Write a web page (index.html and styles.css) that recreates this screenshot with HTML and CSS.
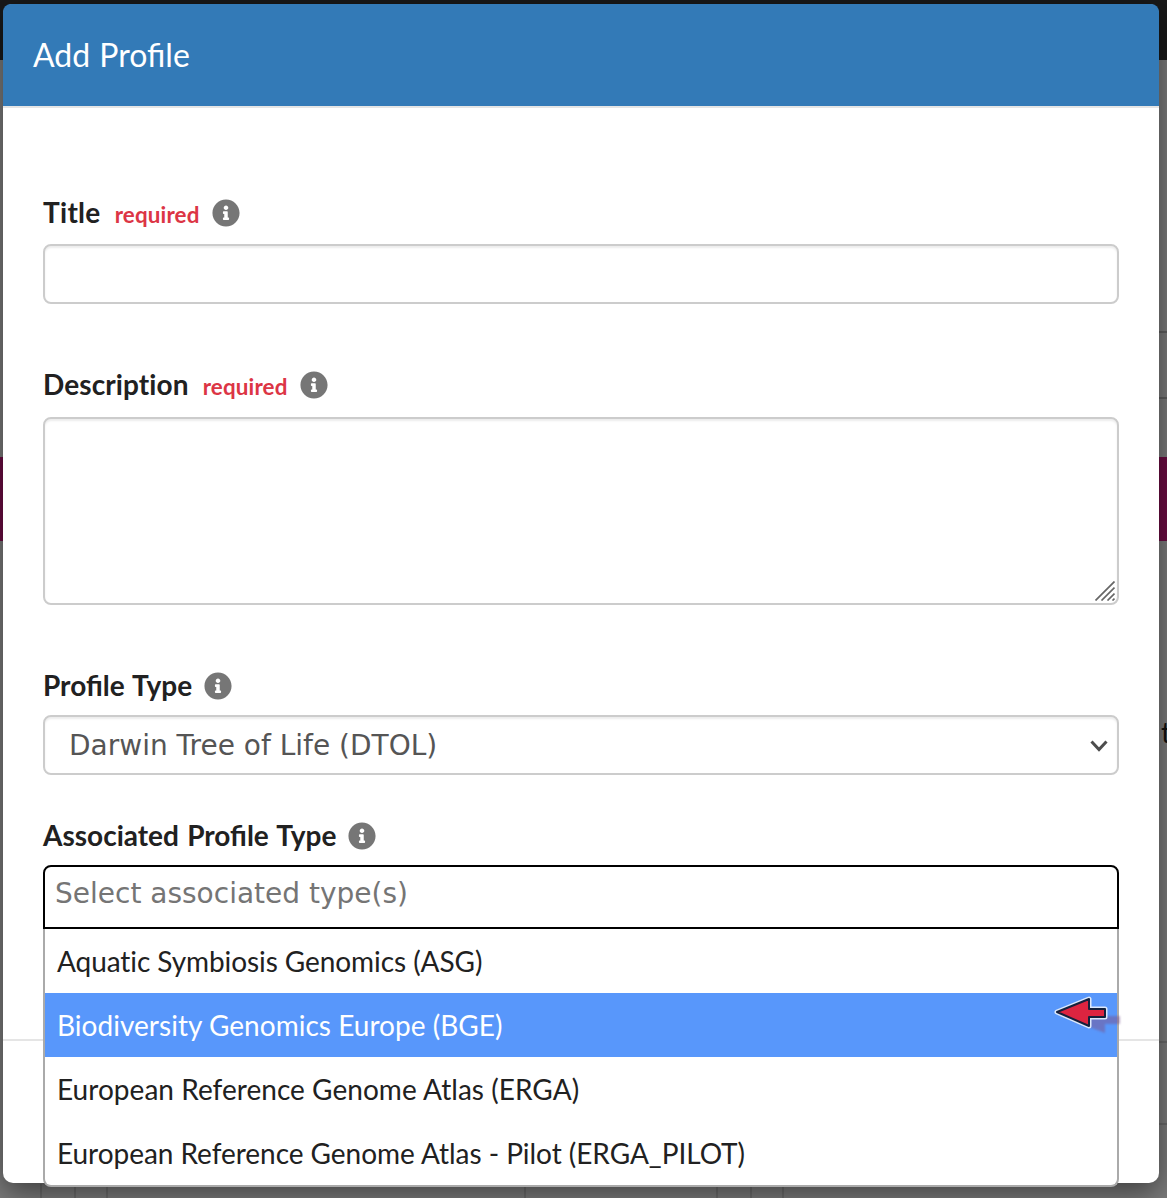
FILE: index.html
```
<!DOCTYPE html>
<html lang="en">
<head>
<meta charset="utf-8">
<title>Add Profile</title>
<link rel="stylesheet" href="styles.css">
</head>
<body>
<svg class="defs" width="0" height="0" aria-hidden="true">
  <symbol id="info" viewBox="0 0 512 512">
    <path fill="currentColor" d="M256 8C119 8 8 119 8 256s111 248 248 248 248-111 248-248S393 8 256 8zm0 110c23.200 0 42 18.800 42 42s-18.800 42-42 42-42-18.800-42-42 18.800-42 42-42zm56 254c0 6.600-5.400 12-12 12h-88c-6.600 0-12-5.400-12-12v-24c0-6.600 5.400-12 12-12h12v-64h-12c-6.600 0-12-5.400-12-12v-24c0-6.600 5.400-12 12-12h64c6.600 0 12 5.400 12 12v100h12c6.600 0 12 5.400 12 12v24z"/>
  </symbol>
</svg>
<div class="page">
  <div class="navbar"></div>
  <div class="intro"></div>
  <div class="banner"></div>
  <div class="content"><span class="page-text">t</span></div>
</div>
<div class="modal" role="dialog">
  <header class="modal-header"><h1>Add Profile</h1></header>
  <main class="modal-body">
    <div class="field title-field">
      <div class="label-row"><label>Title</label><span class="required">required</span><svg class="info"><use href="#info"/></svg></div>
      <div class="control"></div>
    </div>
    <div class="field description-field">
      <div class="label-row"><label>Description</label><span class="required">required</span><svg class="info"><use href="#info"/></svg></div>
      <div class="control textarea">
        <svg class="grip" width="20" height="20" viewBox="0 0 20 20"><path d="M.5 19.500L19.500.5M6.500 19.500l13-13M12.500 19.500l7-7M17.500 19.500l2-2"/></svg>
      </div>
    </div>
    <div class="field type-field">
      <div class="label-row"><label>Profile Type</label><svg class="info"><use href="#info"/></svg></div>
      <div class="control select"><span>Darwin Tree of Life (DTOL)</span>
        <svg class="chevron" width="18" height="12" viewBox="0 0 18 12"><path d="M1.500 1.500L9 9.500l7.500-8"/></svg>
      </div>
    </div>
    <div class="field associated-field">
      <div class="label-row"><label>Associated Profile Type</label><svg class="info"><use href="#info"/></svg></div>
      <div class="control search">Select associated type(s)
        <ul class="options">
          <li class="asg">Aquatic Symbiosis Genomics (ASG)</li>
          <li class="active">Biodiversity Genomics Europe (BGE)</li>
          <li class="erga">European Reference Genome Atlas (ERGA)</li>
          <li class="pilot">European Reference Genome Atlas - Pilot (ERGA_PILOT)</li>
        </ul>
        <svg class="pointer" width="70" height="44" viewBox="0 0 70 44">
          <defs><filter id="soft"><feGaussianBlur stdDeviation="1"/></filter></defs>
          <path class="pointer-shadow" filter="url(#soft)" d="M19 26l31-13v9h18v8H53v9z"/>
          <path class="pointer-halo" d="M5 18l32-13v10h16v8H37v9z"/>
          <path class="pointer-shape" d="M5 18l32-13v10h16v8H37v9z"/>
        </svg>
      </div>
    </div>
  </main>
  <footer class="modal-footer"></footer>
</div>
</body>
</html>
```
FILE: styles.css
```
* { box-sizing: border-box; }
body {
  margin: 0;
  height: 1198px;
  overflow: hidden;
  position: relative;
  font-family: Lato, sans-serif;
  font-size: 28px;
  color: #212121;
}
.defs { position: absolute; }
.page {
  height: 1198px;
  display: grid;
  grid-template-rows: 60px 397px 84px 1fr;
  background: #7c7c7c;
}
.navbar { background: #191919; }
.intro {
  background:
    linear-gradient(#5f5f5f, #5f5f5f) right 271px / 9px 2px no-repeat,
    linear-gradient(#5f5f5f, #5f5f5f) right 337px / 9px 2px no-repeat;
}
.banner { background: #6c0c43; }
.content {
  padding-top: 173px;
  text-align: right;
  background:
    linear-gradient(#6a6a6a, #6a6a6a) right 500px / 9px 2px no-repeat,
    linear-gradient(#6a6a6a, #6a6a6a) right 582px / 9px 2px no-repeat,
    linear-gradient(#6c6c6c, #6c6c6c) 40px bottom / 2px 14px no-repeat,
    linear-gradient(#6c6c6c, #6c6c6c) 74px bottom / 2px 14px no-repeat,
    linear-gradient(#6c6c6c, #6c6c6c) 106px bottom / 2px 14px no-repeat,
    linear-gradient(#6c6c6c, #6c6c6c) 524px bottom / 2px 14px no-repeat,
    linear-gradient(#6c6c6c, #6c6c6c) 716px bottom / 2px 14px no-repeat,
    linear-gradient(#6c6c6c, #6c6c6c) 750px bottom / 2px 14px no-repeat,
    linear-gradient(#6c6c6c, #6c6c6c) 782px bottom / 2px 14px no-repeat;
}
.page-text { display: block; margin-right: -4px; line-height: 36px; color: #101010; }
.modal {
  position: absolute;
  top: 4px;
  left: 3px;
  width: 1156px;
  height: 1179px;
  display: grid;
  grid-template-rows: 104px 931px 1fr;
  background: #fff;
  border-radius: 10px;
  box-shadow: 0 10px 30px rgba(0, 0, 0, .5);
}
.modal-header {
  display: flex;
  align-items: center;
  padding: 0 30px 2px;
  background: #337ab7;
  border-bottom: 2px solid #e5e5e5;
  border-radius: 8px 8px 0 0;
}
.modal-header h1 { margin: 0; font-size: 32px; font-weight: 400; letter-spacing: 0; word-spacing: 1px; color: #fff; }
.modal-body { padding: 88px 40px 0; }
.modal-footer { border-top: 2px solid #e5e5e5; }
.label-row { display: flex; align-items: center; height: 34px; }
label { padding-bottom: 2px; font-weight: 700; line-height: 34px; }
.title-field label { letter-spacing: .3px; }
.description-field label { font-variant-ligatures: none; letter-spacing: .1px; }
.type-field label, .associated-field label { word-spacing: 1.5px; }
.required { margin-left: 14px; padding-top: 3px; font-size: 22.4px; font-weight: 700; letter-spacing: .15px; color: #dc3545; }
.info { width: 28px; height: 28px; margin: 0 0 1px 12px; color: #767676; }
.control {
  height: 60px;
  border: 2px solid #ccc;
  border-radius: 8px;
  background: #fff;
  box-shadow: inset 0 2px 2px rgba(0, 0, 0, .075);
  font-family: "DejaVu Sans", sans-serif;
}
.title-field .label-row { margin-bottom: 14px; }
.description-field { margin-top: 64px; }
.description-field .label-row { margin-bottom: 15px; }
.type-field { margin-top: 64px; }
.associated-field { margin-top: 44px; }
.type-field .label-row, .associated-field .label-row { margin-bottom: 12px; }
.textarea { height: 188px; display: flex; align-items: flex-end; justify-content: flex-end; padding: 0 2px 2px; }
.grip { fill: none; stroke: #666; stroke-width: 1.7; }
.select { display: flex; align-items: center; justify-content: space-between; padding: 0 9px 0 24px; color: #555; }
.chevron { fill: none; stroke: #4d4d4d; stroke-width: 3; margin-top: 2px; }
.search {
  position: relative;
  height: 64px;
  padding: 9px 10px;
  border-color: #000;
  border-radius: 8px 8px 0 0;
  box-shadow: none;
  line-height: 36px;
  color: #757575;
}
.options {
  position: absolute;
  top: 62px;
  left: -2px;
  right: -2px;
  margin: 0;
  padding: 0;
  list-style: none;
  background: #fff;
  border: 2px solid #aaa;
  border-top: 0;
  border-radius: 0 0 8px 8px;
  font-family: Lato, sans-serif;
  font-variant-ligatures: none;
  color: #212121;
}
.options li { height: 64px; padding: 0 12px; line-height: 64px; }
.options .asg { letter-spacing: -.08px; }
.options .active { background: #5897fb; color: #fff; letter-spacing: .03px; }
.options .erga { letter-spacing: .04px; }
.options .pilot { letter-spacing: -.04px; }
.pointer { position: absolute; left: 1007px; top: 127px; }
.pointer-shape { fill: #dc2440; stroke: #14213d; stroke-width: 2; stroke-linejoin: round; }
.pointer-halo { fill: none; stroke: #dce8fb; stroke-width: 5; stroke-linejoin: round; }
.pointer-shadow { fill: #7a5590; opacity: .5; }
```
